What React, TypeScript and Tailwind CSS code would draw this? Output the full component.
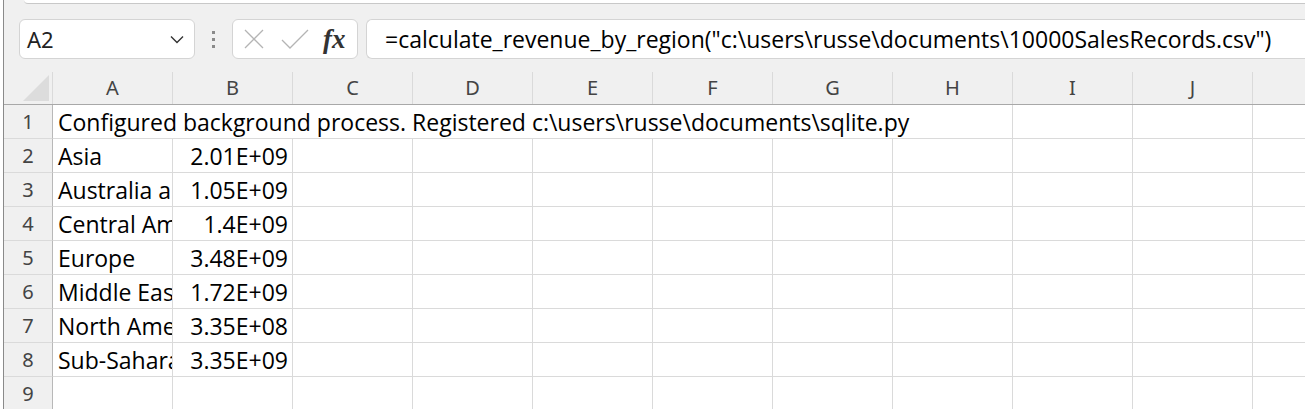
import React from "react";

const cols = ["A", "B", "C", "D", "E", "F", "G", "H", "I", "J", ""];

const rows: { label: string; a: string; b: string }[] = [
  { label: "2", a: "Asia", b: "2.01E+09" },
  { label: "3", a: "Australia and Oceania", b: "1.05E+09" },
  { label: "4", a: "Central America and the Caribbean", b: "1.4E+09" },
  { label: "5", a: "Europe", b: "3.48E+09" },
  { label: "6", a: "Middle East and North Africa", b: "1.72E+09" },
  { label: "7", a: "North America", b: "3.35E+08" },
  { label: "8", a: "Sub-Saharan Africa", b: "3.35E+09" },
  { label: "9", a: "", b: "" },
];

const cellFont = { fontFamily: "'Open Sans', 'Noto Sans', 'Liberation Sans', sans-serif" };
const uiFont = { fontFamily: "'Segoe UI', 'Noto Sans', 'Liberation Sans', sans-serif" };

const RowHead = ({ n }: { n: string }) => (
  <div
    className="w-[49px] h-[34px] shrink-0 flex items-center justify-center border-r border-r-[#b8b8b8] border-b border-b-[#dadada] bg-[#f0f0f0] text-[20px] text-[#444]"
    style={uiFont}
  >
    {n}
  </div>
);

const Empty = ({ count }: { count: number }) => (
  <>
    {Array.from({ length: count }).map((_, i) => (
      <div key={i} className="w-[120px] h-[34px] shrink-0 border-r border-b border-[#dadada]" />
    ))}
  </>
);

export default function App() {
  return (
    <div className="w-[1305px] h-[409px] overflow-hidden flex bg-white text-black">
      {/* left window edge */}
      <div className="w-[3px] shrink-0 bg-white" />
      <div className="w-px shrink-0 bg-[#8a8a8a]" />

      <div className="flex-1 min-w-0 flex flex-col bg-[#f0f0f0]">
        {/* ribbon bottom */}
        <div className="h-[4px] shrink-0 flex">
          <div className="w-[20px] shrink-0" />
          <div className="flex-1 bg-white border-b border-[#c8c8c8] rounded-bl-[6px]" />
        </div>

        {/* formula bar */}
        <div className="h-[68px] shrink-0 flex items-start pt-[15px] pl-[15px]">
          <div className="w-[176px] h-[40px] shrink-0 rounded-[6px] border border-[#d4d4d4] bg-white flex items-center pl-[7px] pr-[10px]">
            <span className="flex-1 text-[22px] text-[#222]" style={uiFont}>
              A2
            </span>
            <svg width="14" height="9" viewBox="0 0 14 9" fill="none">
              <path d="M1 1.5 L7 7.5 L13 1.5" stroke="#333" strokeWidth="1.4" />
            </svg>
          </div>
          <div className="w-[37px] h-[40px] shrink-0 flex flex-col items-center justify-center gap-[4px]">
            <div className="w-[3px] h-[3px] bg-[#8a8a8a]" />
            <div className="w-[3px] h-[3px] bg-[#8a8a8a]" />
            <div className="w-[3px] h-[3px] bg-[#8a8a8a]" />
          </div>
          <div className="w-[126px] h-[40px] shrink-0 rounded-[6px] border border-[#d4d4d4] bg-white flex items-center pl-[11px]">
            <svg width="20" height="20" viewBox="0 0 20 20" fill="none">
              <path d="M1 1 L19 19 M19 1 L1 19" stroke="#b4b4b4" strokeWidth="1.3" />
            </svg>
            <svg width="28" height="20" viewBox="0 0 28 20" fill="none" className="ml-[17px]">
              <path d="M1 11 L9 19 L27 1" stroke="#b4b4b4" strokeWidth="1.3" />
            </svg>
            <span
              className="ml-[14px] italic font-bold text-[27px] leading-none text-[#333]"
              style={{ fontFamily: "'Liberation Serif', 'DejaVu Serif', serif" }}
            >
              fx
            </span>
          </div>
          <div
            className="ml-[8px] flex-1 h-[40px] rounded-l-[6px] border border-r-0 border-[#d4d4d4] bg-white flex items-center pl-[18px] text-[23px] text-black whitespace-nowrap overflow-hidden"
            style={cellFont}
          >
            =calculate_revenue_by_region("c:\users\russe\documents\10000SalesRecords.csv")
          </div>
        </div>

        {/* sheet */}
        <div className="flex-1 flex flex-col">
          {/* column headers */}
          <div className="h-[33px] shrink-0 flex border-b border-[#a8a8a8]">
            <div className="w-[49px] h-full shrink-0 relative border-r border-[#dadada]">
              <svg width="26" height="26" viewBox="0 0 26 26" className="absolute left-[19px] top-[3px]">
                <path d="M26 0 L26 26 L0 26 Z" fill="#dcdcdc" />
              </svg>
            </div>
            {cols.map((c, i) => (
              <div
                key={i}
                className="w-[120px] h-full shrink-0 flex items-center justify-center border-r border-[#dadada] text-[20px] text-[#444]"
                style={uiFont}
              >
                {c}
              </div>
            ))}
          </div>

          {/* row 1 */}
          <div className="flex bg-white">
            <RowHead n="1" />
            <div
              className="w-[960px] h-[34px] shrink-0 border-r border-b border-[#dadada] flex items-center pl-[5px] pt-[2px] text-[23px] whitespace-nowrap"
              style={cellFont}
            >
              Configured background process. Registered c:\users\russe\documents\sqlite.py
            </div>
            <Empty count={3} />
          </div>

          {rows.map((r) => (
            <div key={r.label} className="flex bg-white">
              <RowHead n={r.label} />
              <div
                className="w-[120px] h-[34px] shrink-0 border-r border-b border-[#dadada] flex items-center pl-[5px] pt-[2px] text-[23px] whitespace-nowrap overflow-hidden"
                style={cellFont}
              >
                {r.a}
              </div>
              <div
                className="w-[120px] h-[34px] shrink-0 border-r border-b border-[#dadada] flex items-center justify-end pr-[4px] pt-[2px] text-[23px] whitespace-nowrap"
                style={cellFont}
              >
                {r.b}
              </div>
              <Empty count={9} />
            </div>
          ))}
        </div>
      </div>
    </div>
  );
}
